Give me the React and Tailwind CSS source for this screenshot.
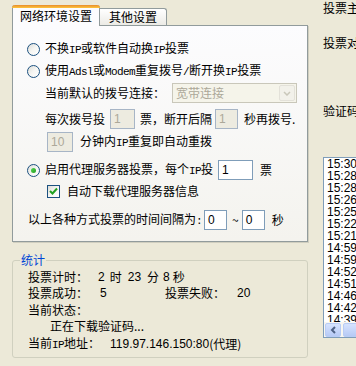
import React from 'react';

const M = ({ children }) => (
  <span className="font-['Liberation_Mono',monospace] text-[11px] tracking-[-0.6px]">{children}</span>
);

function Radio({ checked }) {
  return (
    <span className="w-[13px] h-[13px] shrink-0 rounded-full border border-[#1C5180] bg-gradient-to-br from-[#DCDCD7] via-[#F6F6F3] to-white flex items-center justify-center">
      {checked && (
        <span className="w-[5px] h-[5px] rounded-full bg-gradient-to-br from-[#55D551] to-[#21A121]" />
      )}
    </span>
  );
}

function Check() {
  return (
    <span className="w-[13px] h-[13px] shrink-0 border border-[#1C5180] bg-gradient-to-br from-[#DCDCD7] via-[#F6F6F3] to-white flex items-center justify-center">
      <svg width="9" height="9" viewBox="0 0 9 9">
        <path d="M1 4 L3.5 6.5 L8 1.5" stroke="#21A121" strokeWidth="2" fill="none" />
      </svg>
    </span>
  );
}

function Box({ value, w, disabled }) {
  return (
    <span
      className={
        'h-[20px] shrink-0 border flex items-center pl-[3px] font-["Liberation_Sans",sans-serif] text-[12px] ' +
        (disabled ? 'bg-[#EDEBE0] border-[#A7B5C6] text-[#ACA899]' : 'bg-white border-[#7F9DB9] text-black')
      }
      style={{ width: w }}
    >
      {value}
    </span>
  );
}

const times = [
  '15:30', '15:28', '15:28', '15:26', '15:25', '15:22', '15:21',
  '14:59', '14:59', '14:52', '14:51', '14:46', '14:42', '14:39',
];

export default function App() {
  return (
    <div className="w-[356px] h-[366px] overflow-hidden bg-[#ECE9D8] flex pl-[12px] font-['Noto_Sans_CJK_SC',sans-serif] text-[12px] leading-[16px] text-black">
      <div className="w-[296px] shrink-0 pt-[5px]">
        <div className="flex items-end h-[20px]">
          <div className="relative z-10 -mb-px w-[88px] h-[21px] border-x border-[#919B9C] rounded-t-[3px] bg-[#FCFCFE] flex flex-col">
            <div className="h-[3px] -mx-px rounded-t-[3px] bg-gradient-to-b from-[#E68B2C] to-[#FFC73C]" />
            <div className="flex-1 flex items-center justify-center pb-[2px]">网络环境设置</div>
          </div>
          <div className="w-[67px] h-[17px] border-t border-r border-[#919B9C] rounded-tr-[3px] bg-gradient-to-b from-white to-[#ECEBE6] flex items-center justify-center">
            其他设置
          </div>
        </div>
        <div className="h-[217px] border border-[#919B9C] shadow-[1px_1px_0_#D0CEBF] bg-gradient-to-b from-[#FCFCFE] to-[#F4F3EE] pl-[14px]">
          <div className="mt-[13px] h-[20px] flex items-center">
            <Radio />
            <span className="ml-[5px] whitespace-nowrap">不换<M>IP</M>或软件自动换<M>IP</M>投票</span>
          </div>
          <div className="mt-[2px] h-[20px] flex items-center">
            <Radio />
            <span className="ml-[5px] whitespace-nowrap">使用<M>Adsl</M>或<M>Modem</M>重复拨号<M>/</M>断开换<M>IP</M>投票</span>
          </div>
          <div className="mt-[2px] h-[20px] flex items-center pl-[18px]">
            <span className="w-[120px] whitespace-nowrap">当前默认的拨号连接：</span>
            <div className="ml-[7px] w-[125px] h-[20px] border border-[#C9C7BA] bg-[#F5F4EA] flex items-center">
              <span className="flex-1 pl-[3px] text-[#ACA899]">宽带连接</span>
              <span className="w-[16px] h-[16px] mr-[1px] rounded-[2px] border border-[#E3E1D9] bg-[#F2F1EA] flex items-center justify-center">
                <svg width="8" height="5" viewBox="0 0 8 5">
                  <path d="M1 1 L4 4 L7 1" stroke="#C9C7BA" strokeWidth="1.5" fill="none" />
                </svg>
              </span>
            </div>
          </div>
          <div className="mt-[6px] h-[20px] flex items-center pl-[18px] whitespace-nowrap">
            <span className="w-[60px]">每次拨号投</span>
            <span className="ml-[5px]"><Box value="1" w={25} disabled /></span>
            <span className="ml-[5px] w-[72px]">票，断开后隔</span>
            <span className="ml-[3px]"><Box value="1" w={23} disabled /></span>
            <span className="ml-[6px]">秒再拨号.</span>
          </div>
          <div className="mt-[3px] h-[20px] flex items-center pl-[20px] whitespace-nowrap">
            <Box value="10" w={26} disabled />
            <span className="ml-[7px]">分钟内<M>IP</M>重复即自动重拨</span>
          </div>
          <div className="mt-[8px] h-[20px] flex items-center whitespace-nowrap">
            <Radio checked />
            <span className="ml-[5px] w-[168px]">启用代理服务器投票，每个<M>IP</M>投</span>
            <span className="ml-[5px]"><Box value="1" w={35} /></span>
            <span className="ml-[7px]">票</span>
          </div>
          <div className="mt-[1px] h-[20px] flex items-center pl-[20px] whitespace-nowrap">
            <Check />
            <span className="ml-[7px]">自动下载代理服务器信息</span>
          </div>
          <div className="mt-[9px] h-[20px] flex items-center pl-[1px] whitespace-nowrap">
            <span className="w-[174px]">以上各种方式投票的时间间隔为<M>:</M></span>
            <span className="ml-[2px]"><Box value="0" w={23} /></span>
            <span className="ml-[5px]">~</span>
            <span className="ml-[3px]"><Box value="0" w={23} /></span>
            <span className="ml-[7px]">秒</span>
          </div>
        </div>
        <fieldset className="mt-[12px] border border-[#D0D0BF] rounded-[3px] px-0 pb-[5px] pt-[3px] min-w-0">
          <legend className="ml-[7px] px-[1px] leading-[12px] text-[#0046D5]">统计</legend>
          <div className="pl-[15px] whitespace-nowrap">
            <div className="h-[16px] flex items-center">
              <span className="w-[60px]">投票计时：</span>
              <span className="ml-[10px] font-['Liberation_Sans',sans-serif]">2</span>
              <span className="ml-[5px]">时</span>
              <span className="ml-[6px] font-['Liberation_Sans',sans-serif]">23</span>
              <span className="ml-[6px]">分</span>
              <span className="ml-[4px] font-['Liberation_Sans',sans-serif]">8</span>
              <span className="ml-[3px]">秒</span>
            </div>
            <div className="h-[16px] flex items-center">
              <span className="w-[60px]">投票成功：</span>
              <span className="ml-[12px] w-[65px] font-['Liberation_Sans',sans-serif]">5</span>
              <span className="w-[60px]">投票失败：</span>
              <span className="ml-[12px] font-['Liberation_Sans',sans-serif]">20</span>
            </div>
            <div className="mt-[1px] h-[16px] flex items-center">当前状态：</div>
            <div className="h-[16px] flex items-center pl-[22px]">正在下载验证码...</div>
            <div className="mt-[2px] h-[16px] flex items-center">
              <span className="w-[72px]">当前<M>IP</M>地址：</span>
              <span className="ml-[10px] font-['Liberation_Sans',sans-serif]">119.97.146.150:80</span>
              <span>(代理)</span>
            </div>
          </div>
        </fieldset>
      </div>
      <div className="ml-[15px] flex-1 min-w-0 whitespace-nowrap">
        <div>投票主题：</div>
        <div className="mt-[19px]">投票对象：</div>
        <div className="mt-[52px]">验证码：</div>
        <div className="mt-[38px] w-[120px] h-[181px] border border-[#7F9DB9] bg-white flex flex-col">
          <div className="flex-1 overflow-hidden pl-[3px] font-['Liberation_Sans',sans-serif] text-[12px] leading-[12px]">
            {times.map((t, i) => (
              <div key={i}>{t}</div>
            ))}
          </div>
          <div className="h-[15px] bg-[#F7F6F1] flex items-center pl-[1px] gap-[2px]">
            <span className="w-[16px] h-[14px] rounded-[2px] border border-[#B8CCF5] bg-gradient-to-b from-[#D6E3FE] to-[#B7CAF5] flex items-center justify-center">
              <svg width="6" height="8" viewBox="0 0 6 8">
                <path d="M5 1 L2 4 L5 7" stroke="#4D6185" strokeWidth="2" fill="none" />
              </svg>
            </span>
            <span className="w-[60px] h-[14px] rounded-[2px] border border-[#B8CCF5] bg-gradient-to-b from-[#D6E3FE] to-[#B7CAF5]" />
          </div>
        </div>
      </div>
    </div>
  );
}
